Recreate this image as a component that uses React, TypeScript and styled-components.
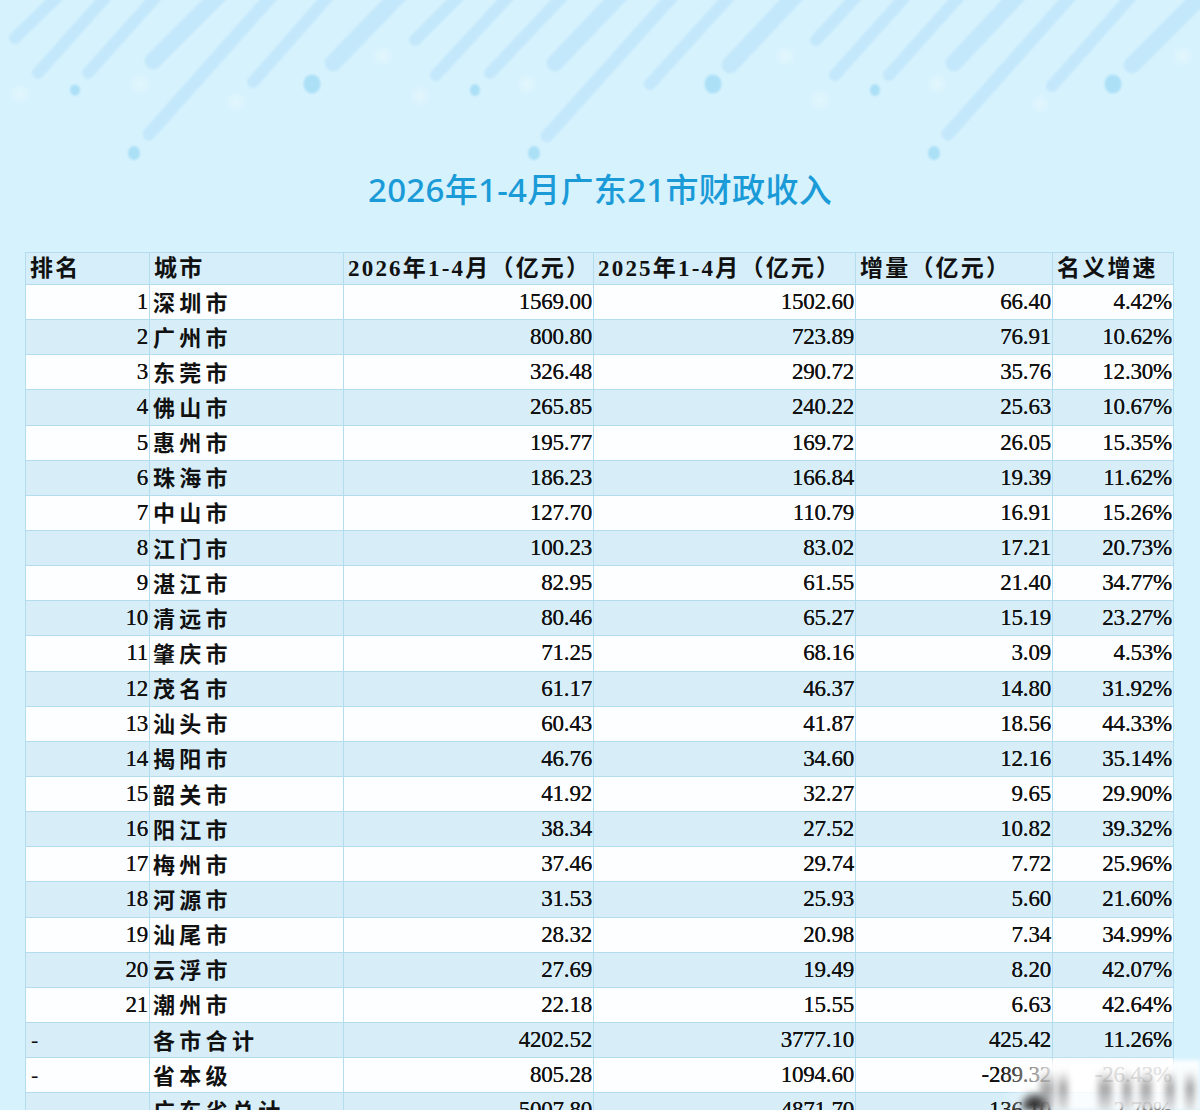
import React from "react";
import styled, { createGlobalStyle } from "styled-components";

const GlobalStyle = createGlobalStyle`
  html, body { margin: 0; padding: 0; background: #d6f2fd; }
  #root { width: 1200px; }
`;

const Page = styled.div`
  position: relative;
  width: 1200px;
  height: 1110px;
  overflow: hidden;
  background: #d6f2fd;
  padding-top: 170px;
  box-sizing: border-box;
`;

const Decor = styled.svg`
  position: absolute;
  left: 0;
  top: 0;
  width: 1200px;
  height: 170px;
  pointer-events: none;
`;

const Title = styled.h1`
  position: relative;
  margin: 0;
  height: 40px;
  line-height: 40px;
  text-align: center;
  font-family: "Noto Sans", "Noto Sans CJK SC", sans-serif;
  font-weight: 500;
  font-size: 33px;
  color: #1a9bd8;
  letter-spacing: 0.3px;
`;

const Table = styled.div`
  position: relative;
  margin: 42px 0 0 25px;
  width: 1149px;
  border-top: 1px solid #b3dcee;
  border-left: 1px solid #b3dcee;
  box-sizing: border-box;
`;

const Row = styled.div<{ $tone: "head" | "white" | "blue"; $h: number }>`
  display: grid;
  grid-template-columns: 124px 194px 250px 262px 197px 121px;
  grid-template-rows: 100%;
  height: ${(p) => p.$h}px;
  box-sizing: border-box;
  border-bottom: 1px solid #b3dcee;
  overflow: visible;
  background: ${(p) =>
    p.$tone === "white" ? "#fdfeff" : p.$tone === "blue" ? "#d7eef9" : "#d5eef9"};
`;

const Cell = styled.div<{ $align?: "left" | "right" }>`
  display: flex;
  align-items: center;
  justify-content: ${(p) => (p.$align === "right" ? "flex-end" : "flex-start")};
  padding: 0 ${(p) => (p.$align === "right" ? "1px" : "0")} 0 ${(p) => (p.$align === "right" ? "0" : "3px")};
  border-right: 1px solid #b3dcee;
  box-sizing: border-box;
  min-height: 0;
  overflow: visible;
  white-space: nowrap;
  line-height: 26px;
  color: #111;
`;

const HeadCell = styled(Cell)`
  font-family: "Liberation Serif", "Noto Sans CJK SC", serif;
  font-weight: 700;
  font-size: 23px;
  letter-spacing: 2.2px;
  padding-left: 4px;
  padding-top: 1px;
`;

const NumCell = styled(Cell)`
  font-family: "Liberation Serif", serif;
  font-size: 23px;
  font-weight: 400;
  letter-spacing: -0.2px;
  text-shadow: 0 0 0.4px #111;
`;

const RankCell = styled(NumCell)`
  padding-right: 1px;
`;

const DashCell = styled(Cell)`
  font-family: "Liberation Serif", serif;
  font-size: 22px;
  padding-left: 5px;
`;

const CityCell = styled(Cell)`
  font-family: "Noto Sans CJK SC", sans-serif;
  font-weight: 700;
  font-size: 22px;
  letter-spacing: 4.3px;
  padding-left: 3px;
  padding-bottom: 3px;
`;

const Watermark = styled.div`
  position: absolute;
  right: 0;
  bottom: 0;
  width: 200px;
  height: 50px;
  background: linear-gradient(90deg, rgba(255,255,255,0) 0%, rgba(255,255,255,0.85) 25%, rgba(255,255,255,0.9) 100%);
  filter: blur(2px);
`;

const Smudge = styled.div<{ $x: number; $w: number; $dark?: boolean }>`
  position: absolute;
  bottom: 0;
  left: ${(p) => p.$x}px;
  width: ${(p) => p.$w}px;
  height: ${(p) => (p.$dark ? 18 : 40)}px;
  background: ${(p) =>
    p.$dark
      ? "radial-gradient(ellipse at 50% 90%, #222 0%, #444 40%, rgba(80,80,80,0) 80%)"
      : "linear-gradient(180deg, rgba(90,90,90,0.0) 0%, rgba(90,90,90,0.55) 45%, rgba(120,120,120,0.2) 100%)"};
  filter: blur(3px);
`;

type Item = [string, string, string, string, string, string];

const rows: Item[] = [
  ["1", "深圳市", "1569.00", "1502.60", "66.40", "4.42%"],
  ["2", "广州市", "800.80", "723.89", "76.91", "10.62%"],
  ["3", "东莞市", "326.48", "290.72", "35.76", "12.30%"],
  ["4", "佛山市", "265.85", "240.22", "25.63", "10.67%"],
  ["5", "惠州市", "195.77", "169.72", "26.05", "15.35%"],
  ["6", "珠海市", "186.23", "166.84", "19.39", "11.62%"],
  ["7", "中山市", "127.70", "110.79", "16.91", "15.26%"],
  ["8", "江门市", "100.23", "83.02", "17.21", "20.73%"],
  ["9", "湛江市", "82.95", "61.55", "21.40", "34.77%"],
  ["10", "清远市", "80.46", "65.27", "15.19", "23.27%"],
  ["11", "肇庆市", "71.25", "68.16", "3.09", "4.53%"],
  ["12", "茂名市", "61.17", "46.37", "14.80", "31.92%"],
  ["13", "汕头市", "60.43", "41.87", "18.56", "44.33%"],
  ["14", "揭阳市", "46.76", "34.60", "12.16", "35.14%"],
  ["15", "韶关市", "41.92", "32.27", "9.65", "29.90%"],
  ["16", "阳江市", "38.34", "27.52", "10.82", "39.32%"],
  ["17", "梅州市", "37.46", "29.74", "7.72", "25.96%"],
  ["18", "河源市", "31.53", "25.93", "5.60", "21.60%"],
  ["19", "汕尾市", "28.32", "20.98", "7.34", "34.99%"],
  ["20", "云浮市", "27.69", "19.49", "8.20", "42.07%"],
  ["21", "潮州市", "22.18", "15.55", "6.63", "42.64%"],
  ["-", "各市合计", "4202.52", "3777.10", "425.42", "11.26%"],
  ["-", "省本级", "805.28", "1094.60", "-289.32", "-26.43%"],
  ["-", "广东省总计", "5007.80", "4871.70", "136.10", "2.79%"],
];

const strokes: [number, number, number, number][] = [
  [15, 38, 54, 12],
  [38, 73, 103, 12],
  [88, 73, 153, 12],
  [153, 61, 214, 17],
  [149, 134, 268, 13],
  [253, 82, 325, 12],
  [333, 63, 394, 17],
  [415, 40, 455, 12],
  [436, 75, 505, 12],
  [490, 73, 559, 12],
  [555, 63, 615, 17],
  [547, 136, 669, 13],
  [650, 84, 726, 12],
  [730, 65, 791, 17],
  [816, 40, 853, 12],
  [835, 75, 902, 12],
  [889, 75, 956, 12],
  [954, 63, 1013, 17],
  [948, 134, 1067, 13],
  [1052, 86, 1128, 12],
  [1132, 65, 1197, 17],
];

const dots: [number, number, number, number][] = [
  [75, 90, 5, 5.5],
  [134, 153, 6, 7],
  [312, 84, 8.5, 9.5],
  [475, 90, 5, 6],
  [534, 153, 6, 7],
  [713, 84, 8.5, 9.5],
  [875, 90, 5, 6],
  [934, 153, 6, 7],
  [1113, 84, 8.5, 9.5],
];

const glows: [number, number][] = [
  [20, 94], [140, 84], [236, 102], [383, 56], [420, 96], [527, 84], [785, 56], [820, 100], [937, 84], [1040, 104], [1183, 56],
];

export default function App() {
  return (
    <>
      <GlobalStyle />
      <Page>
        <Decor viewBox="0 0 1200 170">
          <defs>
            <radialGradient id="glow">
              <stop offset="0%" stopColor="#ffffff" stopOpacity="0.3" />
              <stop offset="100%" stopColor="#ffffff" stopOpacity="0" />
            </radialGradient>
            <filter id="soft" x="-10%" y="-10%" width="120%" height="120%">
              <feGaussianBlur stdDeviation="0.8" />
            </filter>
          </defs>
          {glows.map(([x, y], i) => (
            <circle key={"g" + i} cx={x} cy={y} r={12} fill="url(#glow)" />
          ))}
          <g filter="url(#soft)">
            {strokes.map(([bx, by, tx, w], i) => {
              const dx = tx - bx;
              const k = 1 + 40 / by;
              return (
                <line
                  key={"s" + i}
                  x1={bx}
                  y1={by}
                  x2={bx + dx * k}
                  y2={by - by * k}
                  stroke="#c4e8fb"
                  strokeWidth={w}
                  strokeLinecap="round"
                />
              );
            })}
            {dots.map(([x, y, rx, ry], i) => (
              <ellipse key={"d" + i} cx={x} cy={y} rx={rx} ry={ry} fill="#ace0f7" />
            ))}
          </g>
        </Decor>
        <Title>2026年1-4月广东21市财政收入</Title>
        <Table>
          <Row $tone="head" $h={32}>
            <HeadCell>排名</HeadCell>
            <HeadCell>城市</HeadCell>
            <HeadCell>2026年1-4月（亿元）</HeadCell>
            <HeadCell>2025年1-4月（亿元）</HeadCell>
            <HeadCell>增量（亿元）</HeadCell>
            <HeadCell>名义增速</HeadCell>
          </Row>
          {rows.map((r, i) => (
            <Row key={i} $tone={i % 2 === 0 ? "white" : "blue"} $h={35.15}>
              {r[0] === "-" ? <DashCell>-</DashCell> : <RankCell $align="right">{r[0]}</RankCell>}
              <CityCell>{r[1]}</CityCell>
              <NumCell $align="right">{r[2]}</NumCell>
              <NumCell $align="right">{r[3]}</NumCell>
              <NumCell $align="right">{r[4]}</NumCell>
              <NumCell $align="right">{r[5]}</NumCell>
            </Row>
          ))}
        </Table>
        <Watermark />
        <Smudge $x={1020} $w={30} $dark />
        <Smudge $x={1040} $w={14} />
        <Smudge $x={1058} $w={10} />
        <Smudge $x={1098} $w={14} />
        <Smudge $x={1122} $w={10} />
        <Smudge $x={1140} $w={12} />
        <Smudge $x={1165} $w={10} />
        <Smudge $x={1185} $w={10} />
      </Page>
    </>
  );
}
